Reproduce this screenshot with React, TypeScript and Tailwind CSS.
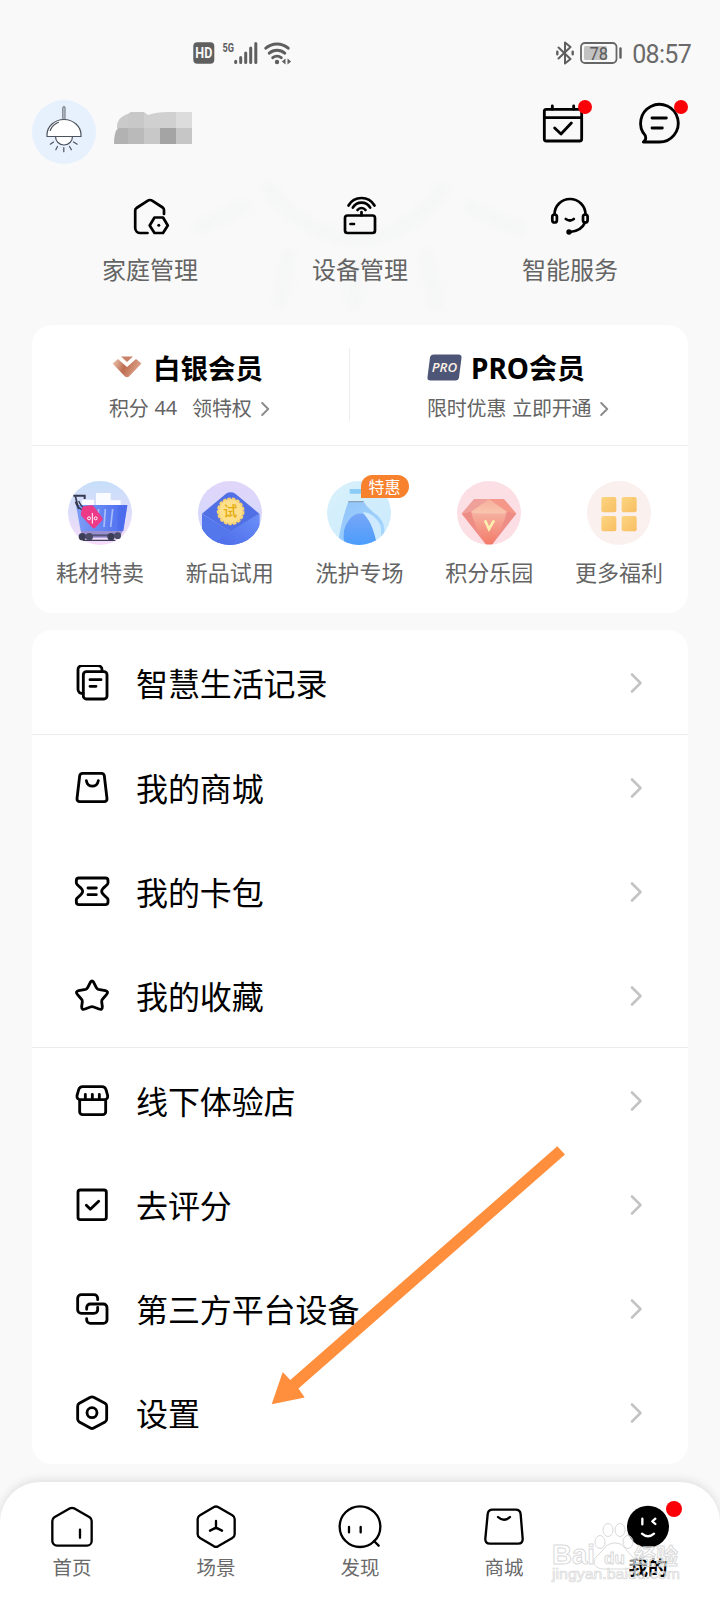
import type { ReactNode } from "react";

const CJK = "font-['Noto_Sans_CJK_SC',sans-serif]";

/* ---------- status bar ---------- */

function StatusBar() {
  return (
    <div className="flex h-[100px] items-center pt-[5px] pr-[29px] pl-[193px] text-[#6a6a6a]">
      <svg className="h-[22px] w-[22px]" viewBox="0 0 22 22">
        <rect x="0.3" y="0.3" width="21" height="21.400" rx="4" fill="#5f5f5f" />
        <text x="10.800" y="16" textAnchor="middle" fontSize="14" fontWeight="700" fill="#f9f9f9" fontFamily="Roboto, sans-serif" textLength="17" lengthAdjust="spacingAndGlyphs">HD</text>
      </svg>
      <svg className="ml-[7px] h-[24px] w-[36px] overflow-visible" viewBox="0 0 36 24">
        <text x="0.500" y="11" fontSize="13" fontWeight="700" fill="#5f5f5f" fontFamily="Roboto, sans-serif" textLength="11.500" lengthAdjust="spacingAndGlyphs">5G</text>
        <g stroke="#5f5f5f" strokeWidth="3" strokeLinecap="round">
          <path d="M13.700 20.200v1.300M18.700 16.500v5M23.700 12v9.500M28.700 7v14.500M33.800 2.500v19" />
        </g>
      </svg>
      <svg className="ml-[6px] h-[24px] w-[28px]" viewBox="0 0 28 24" fill="none" stroke="#5f5f5f" strokeWidth="2.900" strokeLinecap="round">
        <path d="M1.800 7.200a17 17 0 0 1 22.400 0M5.300 12.200a11.500 11.500 0 0 1 15.400 0M8.800 16.700a6.500 6.500 0 0 1 8.400 0" />
        <circle cx="13" cy="21" r="2.200" fill="#5f5f5f" stroke="none" />
        <path d="M21.500 17.500v6l-3.600-3zM23.500 17.500v6l3.600-3z" fill="#5f5f5f" stroke="none" />
      </svg>
      <div className="ml-auto flex items-center">
        <svg className="h-[26px] w-[20px]" viewBox="0 0 20 26" fill="none" stroke="#5f5f5f" strokeWidth="2" strokeLinejoin="round" strokeLinecap="round">
          <path d="M3.500 7.500l12 11.500-5.500 4.500V2.500l5.500 4.500-12 11.500" />
          <path d="M2.300 11.800v2.400M17.700 11.800v2.400" strokeWidth="2.400" />
        </svg>
        <svg className="ml-[5px] h-[22px] w-[43px]" viewBox="0 0 43 22">
          <rect x="1" y="1" width="35.500" height="20" rx="4" fill="none" stroke="#666" strokeWidth="1.800" />
          <rect x="4" y="4" width="23" height="14" rx="1.500" fill="#c2c2c2" />
          <path d="M40.500 6.500v9" stroke="#5f5f5f" strokeWidth="2.400" strokeLinecap="round" />
          <text x="18.700" y="17.500" textAnchor="middle" fontSize="18" fill="#5a5a5a" fontFamily="Roboto, sans-serif" textLength="18.500" lengthAdjust="spacingAndGlyphs">78</text>
        </svg>
        <span className="mt-[4px] ml-[9px] font-['Roboto',sans-serif] text-[25px] leading-none font-normal tracking-[-0.700px]">08:57</span>
      </div>
    </div>
  );
}

/* ---------- header ---------- */

function LampAvatar() {
  return (
    <svg className="h-16 w-16" viewBox="0 0 64 64" fill="none" stroke="#4c535c" strokeWidth="1.200" strokeLinecap="round">
      <circle cx="32" cy="32" r="32" fill="#e7f1fe" stroke="none" />
      <rect x="30.700" y="6.500" width="2.400" height="13.500" rx="1.200" fill="#b9bec4" stroke="#6d747c" strokeWidth="0.900" />
      <path d="M23.500 36.500a8.500 8.500 0 0 0 17 0z" fill="#fff" />
      <path d="M15 36.500v-1.500a17 15.500 0 0 1 34 0v1.500z" fill="#fff" />
      <path d="M18.200 30.500q2-5.500 8.300-8.200" />
      <path d="M21.500 42l-3.200 2.200M25.500 46.500l-1.700 3.200M31.800 47.500v4.200M37.500 46.500l1.900 3.200M41.500 42l3.700 2.200" />
    </svg>
  );
}

function MosaicName() {
  return (
    <svg className="mt-[12px] ml-[18px] h-8 w-[78px]" viewBox="0 0 78 32">
      <path d="M3 16C3 6 9 4 14 2L17 0H30L34 3Q42 0 54 0H78V16z" fill="#d0d0d0" />
      <path d="M14 2L17 0h13v16H14z" fill="#c8c8c8" />
      <path d="M3 16C3 8 8 4 14 2v14z" fill="#cacaca" />
      <path d="M62 0h16v16H62z" fill="#dcdcdc" />
      <path d="M0 32Q0 20 4 16H14V32z" fill="#b2b2b2" />
      <path d="M14 16h16v16H14z" fill="#bababa" />
      <path d="M30 16h16v16H30z" fill="#c8c8c8" />
      <path d="M46 16h16v16H46z" fill="#a4a4a4" />
      <path d="M62 16h16v16H62z" fill="#c6c6c6" />
    </svg>
  );
}

function Dot({ className }: { className: string }) {
  return <span className={`absolute rounded-full bg-[#fb0007] ${className}`} />;
}

function Header() {
  return (
    <div className="flex h-16 items-start pr-[37px] pl-8">
      <LampAvatar />
      <MosaicName />
      <div className="-mt-px ml-auto flex gap-[48px]">
        <div className="relative">
          <svg className="h-12 w-12" viewBox="0 0 144 144" fill="none" stroke="#000" strokeWidth="8.500" strokeLinecap="round" strokeLinejoin="round">
            <rect x="16" y="31" width="112" height="95" rx="6" />
            <path d="M16 56h112M40 21v10M104 21v10" />
            <path d="M47 87l19 18 31-33" />
          </svg>
          <Dot className="top-[1px] left-[39px] h-[14px] w-[14px]" />
        </div>
        <div className="relative">
          <svg className="h-12 w-12" viewBox="0 0 144 144" fill="none" stroke="#000" strokeWidth="8.500" strokeLinecap="round" strokeLinejoin="round">
            <path d="M72 129H25q10-6 6-19A56.500 56.500 0 1 1 72 129z" />
            <path d="M51 57h43M51 87h31" />
          </svg>
          <Dot className="top-[1px] left-[39px] h-[14px] w-[14px]" />
        </div>
      </div>
    </div>
  );
}

/* ---------- quick actions ---------- */

const quickActions: { label: string; icon: ReactNode }[] = [
  {
    label: "家庭管理",
    icon: (
      <g transform="translate(1.500 0)">
        <path d="M32.500 18v-4q0-1.500-1.300-2.500L21 4.800q-2.500-1.600-5 0L5 12q-1.300 1-1.300 2.500V32a5 5 0 0 0 5 5H16" />
        <path d="M23 21.500h8.500l4.800 8-4.800 7.500H23l-4.800-7.500z" />
        <circle cx="27.300" cy="29.300" r="1.500" fill="#000" stroke="none" />
      </g>
    ),
  },
  {
    label: "设备管理",
    icon: (
      <>
        <rect x="5" y="19.500" width="30" height="17.500" rx="2.500" />
        <path d="M10.500 28h3.500M21.500 16v3.500" />
        <path d="M8.500 9.500a15 15 0 0 1 26 0M12.800 11.700a10 10 0 0 1 17.400 0M17.500 14a5 5 0 0 1 8 0" />
      </>
    ),
  },
  {
    label: "智能服务",
    icon: (
      <>
        <path d="M4.500 18.500a15.500 15.500 0 0 1 31 0" />
        <rect x="2.300" y="18.500" width="4.600" height="8" rx="2.300" />
        <rect x="33" y="18.500" width="4.600" height="8" rx="2.300" />
        <path d="M35 26.500Q31.500 35 20 36M15.800 23q4.200 3 8 0" />
        <circle cx="19" cy="36" r="2.700" fill="#000" stroke="none" />
      </>
    ),
  },
];

function QuickActions() {
  return (
    <div className="relative flex px-[45px] pt-8">
      <svg className="absolute top-0 left-[190px] h-[150px] w-[340px] opacity-80 blur-[5px]" viewBox="0 0 340 150" fill="none" stroke="#f4f5f5" strokeWidth="13">
        <path d="M75 20Q110 70 165 75Q225 72 255 20M5 65l55-25M275 40l60 28M165 95v50M100 85l-12 60M235 85l12 60" />
      </svg>
      {quickActions.map((a) => (
        <div key={a.label} className="relative flex flex-1 flex-col items-center">
          <svg className="h-10 w-10" viewBox="0 0 40 40" fill="none" stroke="#000" strokeWidth="2.700" strokeLinecap="round" strokeLinejoin="round">
            {a.icon}
          </svg>
          <span className="mt-[17px] text-[24px] leading-8 text-[#646464]">{a.label}</span>
        </div>
      ))}
    </div>
  );
}

/* ---------- membership card ---------- */

function SmallChevron() {
  return (
    <svg className="mt-px h-[14px] w-[9px]" viewBox="0 0 9 14" fill="none" stroke="#8b8b8b" strokeWidth="1.900" strokeLinecap="round" strokeLinejoin="round">
      <path d="M1.200 1l6 6-6 6" />
    </svg>
  );
}

function Membership() {
  return (
    <div className="flex h-[121px] items-start border-b border-[#ececec]">
      <div className="w-[317px] pt-[24px] pl-[77px]">
        <div className="flex h-9 items-center pl-[3px]">
          <svg className="h-[22px] w-[30px]" viewBox="0 0 30 22">
            <defs>
              <linearGradient id="vipA" x1="0" y1="0" x2="1" y2="0.300">
                <stop offset="0" stopColor="#f0cbb9" />
                <stop offset="0.500" stopColor="#bd6d4f" />
                <stop offset="1" stopColor="#dfa48b" />
              </linearGradient>
            </defs>
            <path d="M9 0.500h12l-6 5.500z" fill="#c98268" />
            <path d="M0.500 7.500L6 3l9 8 9-8 5.500 4.500L17 20.500q-2 1.500-4 0z" fill="url(#vipA)" />
          </svg>
          <span className="ml-[11px] text-[27.500px] leading-9 font-bold text-black">白银会员</span>
        </div>
        <div className="mt-[11px] flex h-6 items-center text-[20px] leading-6 tracking-[-0.200px] text-[#646464]">
          <span>积分</span>
          <span className="ml-[6px] font-['Noto_Sans',sans-serif]">44</span>
          <span className="mr-[9px] ml-[15px]">领特权</span>
          <SmallChevron />
        </div>
      </div>
      <div className="mt-[23px] h-[73px] w-px bg-[#ededed]" />
      <div className="pt-[24px] pl-[77px]">
        <div className="flex h-9 items-center">
          <svg className="h-[27px] w-[35px]" viewBox="0 0 35 27">
            <path d="M7 0.500H31.500q3.500 0 3 3.500L32 23.500q-0.500 3-3.500 3H3.500q-3.500 0-3-3.500L3 3.500q0.500-3 4-3z" fill="#4e5678" />
            <text x="17.500" y="18" textAnchor="middle" fontSize="12.500" fontWeight="600" fontStyle="italic" fill="#fdf1e6" fontFamily="Open Sans, sans-serif" textLength="25.500" lengthAdjust="spacingAndGlyphs">PRO</text>
          </svg>
          <span className="mt-[2px] ml-[9px] font-['Noto_Sans','Noto_Sans_CJK_SC',sans-serif] text-[28px] leading-9 font-bold text-black">
            PRO会员
          </span>
        </div>
        <div className="mt-[11px] flex h-6 items-center text-[20px] leading-6 tracking-[-0.200px] text-[#646464]">
          <span>限时优惠</span>
          <span className="mr-[9px] ml-[6px]">立即开通</span>
          <SmallChevron />
        </div>
      </div>
    </div>
  );
}

/* Round illustrations, all on a 192-unit disc. */
const benefits: { label: string; badge?: string; art: ReactNode }[] = [
  {
    label: "耗材特卖",
    art: (
      <>
        <defs>
          <linearGradient id="cartBg" x1="0" y1="0" x2="0" y2="1">
            <stop offset="0" stopColor="#c5def9" />
            <stop offset="1" stopColor="#f6dcfa" />
          </linearGradient>
          <linearGradient id="cartBody" x1="0" y1="0" x2="1" y2="0">
            <stop offset="0" stopColor="#7d9df5" />
            <stop offset="1" stopColor="#4a6cf0" />
          </linearGradient>
        </defs>
        <circle cx="96" cy="96" r="96" fill="url(#cartBg)" />
        <path d="M42 56h36v20H42zM84 36h44v40H84zM124 58h34v18h-34z" fill="#fbfcff" />
        <path d="M24 72H178L166 150H38z" fill="url(#cartBody)" />
        <path d="M150 74h28l-13 75h-16z" fill="#4a69ea" opacity="0.600" />
        <path d="M112 84l-4 54M134 84l-6 54M92 84l-2 20" stroke="#a9bcfa" strokeWidth="5" />
        <path d="M16 44h34v10" stroke="#35384f" strokeWidth="6" fill="none" />
        <path d="M22 46l10 38" stroke="#35384f" strokeWidth="5" fill="none" />
        <path d="M22 62q8 24 28 26M32 60q8 18 20 24" stroke="#35384f" strokeWidth="4" fill="none" />
        <path d="M48 76l20-3q6-1 10 4l24 32q4 6-1 11L82 140q-5 5-10-1L41 106q-3-4-2-9l3-15q1-5 6-6z" fill="#ec3a88" />
        <circle cx="63" cy="112" r="4.500" fill="none" stroke="#fff" strokeWidth="3" />
        <circle cx="83" cy="112" r="4.500" fill="none" stroke="#fff" strokeWidth="3" />
        <path d="M73 96v32" stroke="#fff" strokeWidth="3" />
        <path d="M38 150h126l-10 20H46z" fill="#9a90d0" />
        <path d="M44 178h98" stroke="#3c3e58" strokeWidth="4" />
        <path d="M60 163h80" stroke="#55567a" strokeWidth="6" />
        <circle cx="43" cy="167" r="11" fill="#3c3e58" />
        <circle cx="64" cy="167" r="11" fill="#4a4b66" />
        <circle cx="129" cy="167" r="11" fill="#3c3e58" />
        <circle cx="149" cy="164" r="10" fill="#4a4b66" />
      </>
    ),
  },
  {
    label: "新品试用",
    art: (
      <>
        <defs>
          <linearGradient id="envBg" x1="0" y1="0" x2="0" y2="1">
            <stop offset="0" stopColor="#e1d6fa" />
            <stop offset="1" stopColor="#cdd9fd" />
          </linearGradient>
          <linearGradient id="envF" x1="0" y1="0" x2="1" y2="1">
            <stop offset="0" stopColor="#5f83f0" />
            <stop offset="1" stopColor="#4663e3" />
          </linearGradient>
          <linearGradient id="envR" x1="1" y1="0" x2="0" y2="1">
            <stop offset="0" stopColor="#6b90f8" />
            <stop offset="1" stopColor="#4a69e8" />
          </linearGradient>
          <clipPath id="envClip">
            <circle cx="96" cy="96" r="96" />
          </clipPath>
        </defs>
        <circle cx="96" cy="96" r="96" fill="url(#envBg)" />
        <g clipPath="url(#envClip)">
          <path d="M12 98L84 38q14-8 28 0l72 60-86 54z" fill="#5270e6" />
          <path d="M12 98l86 54 86-54v94H12z" fill="url(#envF)" />
          <path d="M12 100v92h40L94 150z" fill="#5577ec" />
          <path d="M98 150l86-50v92H40z" fill="url(#envR)" />
        </g>
        <circle cx="98" cy="91" r="38" fill="#fcd97b" stroke="#f9d373" strokeWidth="7" strokeDasharray="10 4" />
        <circle cx="98" cy="91" r="34" fill="#fddf8c" />
        <text x="97" y="106" textAnchor="middle" fontSize="42" fontWeight="500" fill="#e5ad0c" fontFamily="Noto Sans CJK SC, sans-serif">试</text>
      </>
    ),
  },
  {
    label: "洗护专场",
    badge: "特惠",
    art: (
      <>
        <defs>
          <linearGradient id="btlBg" x1="0" y1="0" x2="1" y2="1">
            <stop offset="0" stopColor="#d8f2fb" />
            <stop offset="1" stopColor="#cbe9fd" />
          </linearGradient>
          <linearGradient id="btl" x1="0" y1="0" x2="1" y2="1">
            <stop offset="0" stopColor="#8fc2fa" />
            <stop offset="1" stopColor="#a9d9fc" />
          </linearGradient>
          <linearGradient id="btlIn" x1="0" y1="0" x2="0" y2="1">
            <stop offset="0" stopColor="#78a6f6" />
            <stop offset="1" stopColor="#4b9dfd" />
          </linearGradient>
          <clipPath id="btlClip">
            <circle cx="96" cy="96" r="96" />
          </clipPath>
        </defs>
        <circle cx="96" cy="96" r="96" fill="url(#btlBg)" />
        <g clipPath="url(#btlClip)">
          <path d="M64 62h46q14 22 40 40 20 18 22 42v48H32q10-70 32-130z" fill="url(#btl)" />
          <path d="M108 92q36 6 52 40 8 34-6 60h-10q-2-50-36-100z" fill="#d6edfd" opacity="0.850" />
          <path d="M68 114q16-20 40-16 28 22 42 94H54q-14-44 14-78z" fill="url(#btlIn)" />
          <path d="M68 24h50v14H68z" fill="#8ccdf6" />
          <path d="M64 62h46" stroke="#8294a8" strokeWidth="3" />
        </g>
      </>
    ),
  },
  {
    label: "积分乐园",
    art: (
      <>
        <defs>
          <linearGradient id="gem" x1="0" y1="0" x2="0" y2="1">
            <stop offset="0" stopColor="#f6b3a2" />
            <stop offset="1" stopColor="#f37a68" />
          </linearGradient>
          <linearGradient id="gemTop" x1="0" y1="0" x2="0" y2="1">
            <stop offset="0" stopColor="#f6b09c" />
            <stop offset="1" stopColor="#f9c5ae" />
          </linearGradient>
        </defs>
        <circle cx="96" cy="96" r="96" fill="#fcdfe4" />
        <path d="M52 54h88l38 44-66 84q-4 8-10 8H90q-6 0-10-8L14 98z" fill="#ee8c86" />
        <path d="M52 54L14 98l28-6 54-38z" fill="#f0a09b" />
        <path d="M140 54l38 44-28-6-54-38z" fill="#f5988a" />
        <path d="M42 92q6 6 16 6h76q10 0 16-6-12 46-44 98H88Q54 140 42 92z" fill="url(#gem)" />
        <path d="M96 54l54 38q-6 6-16 6H58q-10 0-16-6z" fill="url(#gemTop)" />
        <path d="M84 118l12 26 15-26" fill="none" stroke="#fdeeb0" strokeWidth="8" />
      </>
    ),
  },
  {
    label: "更多福利",
    art: (
      <>
        <defs>
          <linearGradient id="tile" x1="0" y1="0" x2="1" y2="1">
            <stop offset="0" stopColor="#fcd581" />
            <stop offset="1" stopColor="#f8be62" />
          </linearGradient>
        </defs>
        <circle cx="96" cy="96" r="96" fill="#faf0ee" />
        <rect x="43" y="48" width="45" height="46" rx="6" fill="url(#tile)" />
        <rect x="104" y="48" width="45" height="46" rx="6" fill="url(#tile)" />
        <rect x="43" y="105" width="45" height="46" rx="6" fill="url(#tile)" />
        <rect x="104" y="105" width="45" height="46" rx="6" fill="url(#tile)" />
      </>
    ),
  },
];

function Benefits() {
  return (
    <div className="flex h-[167px] pt-[35px] pr-[4px] pl-[3px]">
      {benefits.map((b) => (
        <div key={b.label} className="relative flex flex-1 flex-col items-center">
          <svg className="h-16 w-16" viewBox="0 0 192 192">
            {b.art}
          </svg>
          {b.badge && (
            <span className="absolute -top-[6px] left-[66px] flex h-[23px] w-[48px] items-center justify-center rounded-full rounded-bl-none bg-[#f8812e] text-[16px] leading-none text-white">
              <span className="-mt-[2px]">{b.badge}</span>
            </span>
          )}
          <span className="mt-[10px] text-[22px] leading-8 text-[#646464]">{b.label}</span>
        </div>
      ))}
    </div>
  );
}

/* ---------- menu ---------- */

type MenuItem = { label: string; icon: ReactNode };

const menuGroups: MenuItem[][] = [
  [
    {
      label: "智慧生活记录",
      icon: (
        <g transform="translate(0 -2)">
          <rect x="28" y="22" width="71" height="82" rx="9" />
          <path d="M27 87h-3a12 12 0 0 1-12-12V16A12 12 0 0 1 24 4h48a12 12 0 0 1 12 12v5M48 46h33M48 66h18" />
        </g>
      ),
    },
  ],
  [
    {
      label: "我的商城",
      icon: (
        <>
          <path d="M27 10H82a9 9 0 0 1 9 8l8 68a8 8 0 0 1-8 9H17a8 8 0 0 1-8-9l8-68a9 9 0 0 1 10-8z" />
          <path d="M37 32c3 22 33 22 36 0" />
        </>
      ),
    },
    {
      label: "我的卡包",
      icon: (
        <path d="M15 12H94a8 8 0 0 1 8 8V27c0 8-19 13-19 25s19 17 19 25v7a8 8 0 0 1-8 8H15a8 8 0 0 1-8-8v-7c0-8 19-13 19-25S7 35 7 27v-7a8 8 0 0 1 8-8zM42 42h25M42 62h25" />
      ),
    },
    {
      label: "我的收藏",
      icon: (
        <path d="M49 13q5-8 10 0l8 16q2 4 6 5l21 4q11 3 4 11L86 63q-3 3-3 8l2 15q0 11-10 7L59 87q-5-2-10 0L33 93q-10 4-10-7l2-15q0-5-3-8L10 49q-7-8 4-11l21-4q4-1 6-5z" />
      ),
    },
  ],
  [
    {
      label: "线下体验店",
      icon: (
        <>
          <path d="M26 11h58q9 0 12 9l5 18q1 12-11 12H20Q8 50 9 38l5-18q3-9 12-9zM34 34v14M55 34v14M76 34v14" />
          <path d="M17 52v34a9 9 0 0 0 9 9h60a9 9 0 0 0 9-9V52" />
        </>
      ),
    },
    {
      label: "去评分",
      icon: (
        <>
          <rect x="12" y="9" width="85" height="89" rx="7" />
          <path d="M37 55l12 12 25-24" />
        </>
      ),
    },
    {
      label: "第三方平台设备",
      icon: (
        <>
          <path d="M71 26v-4a11 11 0 0 0-11-11H22a11 11 0 0 0-11 11v34a11 11 0 0 0 11 11h38a11 11 0 0 0 11-11v-7" />
          <path d="M38 55v-5a11 11 0 0 1 11-11h39a11 11 0 0 1 11 11v36a11 11 0 0 1-11 11H49a11 11 0 0 1-11-11v-3" />
        </>
      ),
    },
    {
      label: "设置",
      icon: (
        <>
          <path d="M49 7q5-3 10 0l34 18q5 3 5 9v38q0 6-5 9l-34 18q-5 3-10 0L16 81q-5-3-5-9V34q0-6 5-9z" />
          <circle cx="54" cy="53" r="15" />
        </>
      ),
    },
  ],
];

function MenuRow({ label, icon }: MenuItem) {
  return (
    <div className="flex h-[104px] items-center pr-[44px] pl-[42px]">
      <svg className="mt-px h-9 w-9" viewBox="0 0 108 108" fill="none" stroke="#000" strokeWidth="8.500" strokeLinecap="round" strokeLinejoin="round">
        {icon}
      </svg>
      <span className="-mt-[1px] ml-[26px] text-[32px] leading-10 tracking-[-0.100px] text-black">{label}</span>
      <svg className="mt-px ml-auto h-[22px] w-[14px]" viewBox="0 0 14 22" fill="none" stroke="#c4c4c4" strokeWidth="2.600" strokeLinecap="round" strokeLinejoin="round">
        <path d="M2 2.500l8.500 8.500-8.500 8.500" />
      </svg>
    </div>
  );
}

function MenuCard() {
  return (
    <div className="mx-8 mt-[17px] divide-y divide-[#ececec] rounded-[20px] bg-white">
      {menuGroups.map((group, i) => (
        <div key={i}>
          {group.map((item) => (
            <MenuRow key={item.label} {...item} />
          ))}
        </div>
      ))}
    </div>
  );
}

/* ---------- bottom navigation ---------- */

const tabs: { label: string; active?: boolean; icon: ReactNode }[] = [
  {
    label: "首页",
    icon: (
      <path d="M66 16q6-3 12 0l47 27q6 4 6 11v60a14 14 0 0 1-14 14H27a14 14 0 0 1-14-14V54q0-7 6-11zM96 80v24" />
    ),
  },
  {
    label: "场景",
    icon: (
      <path d="M66 12q6-3 12 0l43 25q7 4 7 11v46q0 7-7 11l-43 25q-6 3-12 0L24 105q-7-4-7-11V48q0-7 7-11zM72 54v20M72 74l-18 9M72 74l18 9" />
    ),
  },
  {
    label: "发现",
    icon: (
      <>
        <circle cx="72" cy="71" r="61" />
        <path d="M114 114l14 14M39 72v16M74 72v16" />
      </>
    ),
  },
  {
    label: "商城",
    icon: (
      <>
        <path d="M38 20h69q14 0 15 14l6 73q1 15-14 15H30q-15 0-14-15l7-73q1-14 15-14z" />
        <path d="M54 42q18 17 36 0" />
      </>
    ),
  },
  {
    label: "我的",
    active: true,
    icon: (
      <>
        <circle cx="72" cy="71" r="63" fill="#000" stroke="none" />
        <path d="M55 47v17M94 47l-9 8 9 8M54 92q18 16 36 0" stroke="#fff" />
      </>
    ),
  },
];

function Watermark() {
  return (
    <svg className="absolute top-[36px] left-[550px] h-[66px] w-[140px]" viewBox="0 0 140 66" fill="#fff" fillOpacity="0.550" stroke="#d2d2d2" strokeOpacity="0.850" strokeWidth="1">
      <ellipse cx="50" cy="24" rx="5" ry="6.500" />
      <ellipse cx="58" cy="12" rx="5" ry="6.500" />
      <ellipse cx="70" cy="12" rx="5" ry="6.500" />
      <ellipse cx="78" cy="24" rx="5" ry="6.500" />
      <path d="M65 25c9 0 10 7 16 12 7 6 3 14-6 14H54c-10 0-13-8-6-14 6-5 8-12 17-12z" />
      <text x="2" y="46" fontSize="28" fontWeight="700" fontFamily="Liberation Sans, sans-serif" textLength="43" lengthAdjust="spacingAndGlyphs">Bai</text>
      <text x="54" y="46" fontSize="17" fontWeight="700" fontFamily="Liberation Sans, sans-serif">du</text>
      <text x="84" y="46" fontSize="22" fontWeight="700" fontFamily="Noto Sans CJK SC, sans-serif">经验</text>
      <text x="2" y="61" fontSize="14.500" fontFamily="Liberation Sans, sans-serif" strokeWidth="0.700" textLength="128" lengthAdjust="spacingAndGlyphs">jingyan.baidu.com</text>
    </svg>
  );
}

function BottomNav() {
  return (
    <div className="relative mt-[18px] flex h-[118px] rounded-t-[40px] bg-white pt-[21px] shadow-[0_-2px_10px_rgba(0,0,0,0.11)]">
      {tabs.map((t) => (
        <div key={t.label} className="relative flex flex-1 flex-col items-center">
          <svg className="h-12 w-12" viewBox="0 0 144 144" fill="none" stroke="#000" strokeWidth="7" strokeLinecap="round" strokeLinejoin="round">
            {t.icon}
          </svg>
          {t.active && <Dot className="-top-[2px] left-[90px] h-4 w-4" />}
          <span className={t.active ? "mt-[4px] text-[19.500px] leading-6 font-bold text-black" : "mt-[4px] text-[19.500px] leading-6 text-[#6a6a6a]"}>
            {t.label}
          </span>
        </div>
      ))}
      <Watermark />
    </div>
  );
}

export default function App() {
  return (
    <div className={`relative h-[1600px] w-[720px] overflow-hidden bg-[#f9f9f9] ${CJK}`}>
      <StatusBar />
      <Header />
      <QuickActions />
      <div className="relative mx-8 mt-[40px] rounded-[20px] bg-white">
        <Membership />
        <Benefits />
      </div>
      <MenuCard />
      <BottomNav />
      <svg className="absolute top-[1140px] left-[266px] h-[270px] w-[306px]" viewBox="266 1140 306 270" fill="#ff8f3c">
        <path d="M271.700 1404.300L282.700 1372 290.300 1380 557.300 1146.300 565 1154.500 298.500 1388.500 304.700 1397.500z" />
      </svg>
    </div>
  );
}
